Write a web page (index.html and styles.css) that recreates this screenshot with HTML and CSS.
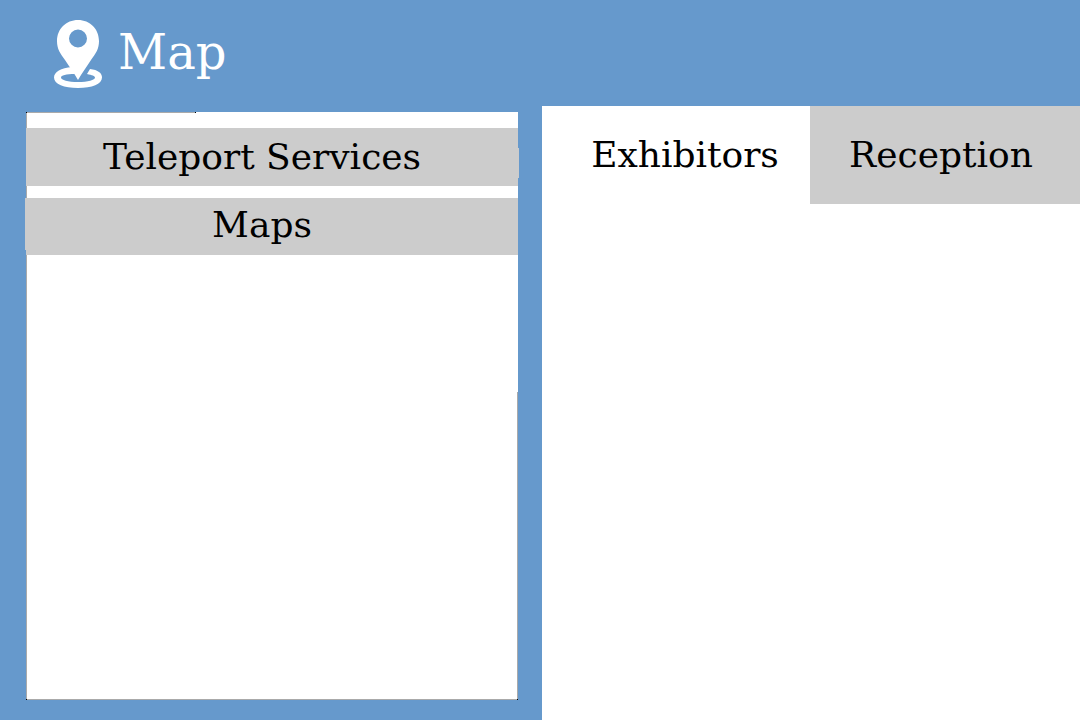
FILE: index.html
```html
<!DOCTYPE html>
<html lang="en">
<head>
<meta charset="utf-8">
<meta name="viewport" content="width=device-width, initial-scale=1">
<title>Map</title>
<link rel="stylesheet" href="styles.css">
</head>
<body>
<header class="header">
  <svg class="pin" viewBox="0 0 48 68" aria-hidden="true">
    <path fill="#fff" fill-rule="evenodd" d="M24 0C12 0 3 9 3 21C3 29 6 33 11 40C15 46 20 53 24 60C28 53 33 46 37 40C42 33 45 29 45 21C45 9 36 0 24 0ZM24 9.500A9 9 0 1 1 24 27.500A9 9 0 1 1 24 9.500Z"/>
    <path fill="#fff" d="M18 47C7 48 0 52 0 57.500C0 64 10 68 24 68S48 64 48 57.500C48 53 44 50 36 49L33 54C38 55 41 56 41 57.500C41 60 34 62 24 62S7 60 7 57.500C7 55.500 12 54 21 54Z"/>
  </svg>
  <h1 class="title">Map</h1>
</header>
<main class="main">
  <nav class="menu" aria-label="Map menu">
    <button class="item item-services" type="button">Teleport Services</button>
    <button class="item item-maps" type="button">Maps</button>
  </nav>
  <section class="panel">
    <div class="tabs" role="tablist">
      <button class="tab tab-exhibitors" type="button" role="tab" aria-selected="true">Exhibitors</button>
      <button class="tab tab-reception" type="button" role="tab" aria-selected="false">Reception</button>
    </div>
  </section>
</main>
</body>
</html>
```
FILE: styles.css
```css
* { box-sizing: border-box; }

body {
  margin: 0;
  min-height: 100vh;
  display: flex;
  flex-direction: column;
  background: #6699cc;
  color: #000;
  font-family: "DejaVu Serif", serif;
}

.header {
  display: flex;
  align-items: center;
  gap: 16px;
  height: 106px;
  padding: 2px 54px 0;
}

.pin { width: 48px; height: 68px; flex: none; }

.title {
  margin: 0;
  padding-bottom: 4px;
  color: #fff;
  font-size: 48px;
  line-height: 64px;
  font-weight: 400;
}

.main {
  flex: 1;
  display: grid;
  grid-template-columns: 542fr 538fr;
}

.menu {
  display: flex;
  flex-direction: column;
  gap: 12px;
  margin: 6px 24px 20px 26px;
  padding-top: 16px;
  background:
    linear-gradient(#000, #000) left top / 1px 1px no-repeat,
    linear-gradient(#000, #000) 169px 0 / 1px 1px no-repeat,
    linear-gradient(#000, #000) left bottom / 1px 1px no-repeat,
    linear-gradient(#000, #000) right bottom / 1px 1px no-repeat,
    linear-gradient(#aaa, #aaa) left top / 169px 1px no-repeat,
    linear-gradient(#aaa, #aaa) left top / 1px 100% no-repeat,
    linear-gradient(#aaa, #aaa) left bottom / 100% 1px no-repeat,
    linear-gradient(#aaa, #aaa) right bottom / 1px 308px no-repeat,
    #fff;
}

.item,
.tab {
  border: 0;
  background: #ccc;
  color: inherit;
  font: 400 36px/48px "DejaVu Serif", serif;
  text-align: center;
}

.item {
  position: relative;
  height: 58px;
  padding: 0 20px 0 0;
}

.item-maps { height: 57px; padding-bottom: 4px; }

.item::after {
  content: "";
  position: absolute;
  width: 1px;
  background: #ccc;
}

.item-services::after { right: -1px; top: 20px; height: 30px; }
.item-maps::after { left: -1px; top: 0; height: 52px; }

.panel { background: #fff; }

.tabs {
  display: grid;
  grid-template-columns: 268fr 270fr;
}

.tab { height: 98px; }
.tab-exhibitors { background: #fff; padding: 0 0 0 18px; }
.tab-reception { padding: 0 8px 0 0; }
```
